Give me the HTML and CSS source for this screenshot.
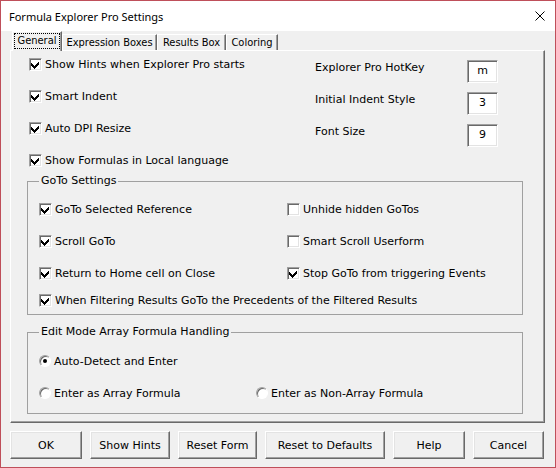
FILE: index.html
```html
<!DOCTYPE html>
<html>
<head>
<meta charset="utf-8">
<link rel="stylesheet" href="styles.css">
</head>
<body>
<div class="window">
  <div class="titlebar">
    <span class="title">Formula Explorer Pro Settings</span>
    <svg class="close" width="10" height="10" viewBox="0 0 10 10"><path d="M0.5 0.5 L9.5 9.5 M9.5 0.5 L0.5 9.5" stroke="#000" stroke-width="1" fill="none"/></svg>
  </div>
  <div class="client">
    <div class="tabs">
      <div class="tab active t-general"><span class="focus">General</span></div>
      <div class="tab t-expr">Expression Boxes</div>
      <div class="tab t-results">Results Box</div>
      <div class="tab t-color">Coloring</div>
    </div>
    <div class="page">
      <div class="top">
        <div class="left-col">
          <label class="opt"><span class="cb on"><svg viewBox="0 0 13 13" width="13" height="13"><polygon points="2,5 2,8 5,11 10,6 10,3 5,8" fill="#000"/></svg></span>Show Hints when Explorer Pro starts</label>
          <label class="opt"><span class="cb on"><svg viewBox="0 0 13 13" width="13" height="13"><polygon points="2,5 2,8 5,11 10,6 10,3 5,8" fill="#000"/></svg></span>Smart Indent</label>
          <label class="opt"><span class="cb on"><svg viewBox="0 0 13 13" width="13" height="13"><polygon points="2,5 2,8 5,11 10,6 10,3 5,8" fill="#000"/></svg></span>Auto DPI Resize</label>
          <label class="opt"><span class="cb on"><svg viewBox="0 0 13 13" width="13" height="13"><polygon points="2,5 2,8 5,11 10,6 10,3 5,8" fill="#000"/></svg></span>Show Formulas in Local language</label>
        </div>
        <div class="right-col">
          <div class="field"><span class="flabel">Explorer Pro HotKey</span><span class="tbox">m</span></div>
          <div class="field"><span class="flabel">Initial Indent Style</span><span class="tbox">3</span></div>
          <div class="field"><span class="flabel">Font Size</span><span class="tbox">9</span></div>
        </div>
      </div>
      <fieldset class="group goto">
        <legend>GoTo Settings</legend>
        <div class="grid2">
          <label class="opt"><span class="cb on"><svg viewBox="0 0 13 13" width="13" height="13"><polygon points="2,5 2,8 5,11 10,6 10,3 5,8" fill="#000"/></svg></span>GoTo Selected Reference</label>
          <label class="opt"><span class="cb"></span>Unhide hidden GoTos</label>
          <label class="opt"><span class="cb on"><svg viewBox="0 0 13 13" width="13" height="13"><polygon points="2,5 2,8 5,11 10,6 10,3 5,8" fill="#000"/></svg></span>Scroll GoTo</label>
          <label class="opt"><span class="cb"></span>Smart Scroll Userform</label>
          <label class="opt"><span class="cb on"><svg viewBox="0 0 13 13" width="13" height="13"><polygon points="2,5 2,8 5,11 10,6 10,3 5,8" fill="#000"/></svg></span>Return to Home cell on Close</label>
          <label class="opt"><span class="cb on"><svg viewBox="0 0 13 13" width="13" height="13"><polygon points="2,5 2,8 5,11 10,6 10,3 5,8" fill="#000"/></svg></span>Stop GoTo from triggering Events</label>
          <label class="opt wide"><span class="cb on"><svg viewBox="0 0 13 13" width="13" height="13"><polygon points="2,5 2,8 5,11 10,6 10,3 5,8" fill="#000"/></svg></span>When Filtering Results GoTo the Precedents of the Filtered Results</label>
        </div>
      </fieldset>
      <fieldset class="group edit">
        <legend>Edit Mode Array Formula Handling</legend>
        <div class="radios">
          <label class="opt"><span class="rb on"></span>Auto-Detect and Enter</label>
          <div class="rrow">
            <label class="opt r1"><span class="rb"></span>Enter as Array Formula</label>
            <label class="opt"><span class="rb"></span>Enter as Non-Array Formula</label>
          </div>
        </div>
      </fieldset>
    </div>
    <div class="buttons">
      <button class="btn w72">OK</button>
      <button class="btn w80">Show Hints</button>
      <button class="btn w79">Reset Form</button>
      <button class="btn w120">Reset to Defaults</button>
      <button class="btn w72">Help</button>
      <button class="btn w71">Cancel</button>
    </div>
  </div>
</div>
</body>
</html>
```

FILE: styles.css
```css
* { box-sizing: border-box; }
html, body { margin: 0; padding: 0; background: #f0f0f0; }
.window {
  width: 556px;
  height: 468px;
  border: 1px solid #bf4f5a;
  background: #f0f0f0;
  font-family: "DejaVu Sans", sans-serif;
  font-size: 11px;
  color: #000;
}
.titlebar {
  height: 30px;
  background: #fff;
  display: flex;
  align-items: center;
  justify-content: space-between;
  padding: 0 10px 0 8px;
}
.title {
  font-family: "Noto Sans", sans-serif;
  font-size: 11px;
  color: #000;
}
.close { display: block; margin-top: -1px; }
.client { padding: 0 10px 0 8px; }
.tabs {
  display: flex;
  align-items: flex-end;
  height: 19px;
  margin-left: 3px;
  position: relative;
  z-index: 2;
  font-family: "DejaVu Sans Condensed", "DejaVu Sans", sans-serif;
  font-stretch: condensed;
}
.tab {
  height: 16px;
  padding: 0;
  line-height: 15px;
  text-align: center;
  border-top: 1px solid #fff;
  border-left: 1px solid #fff;
  border-right: 1px solid #696969;
  box-shadow: inset -1px 0 #a0a0a0;
  background: #f0f0f0;
  white-space: nowrap;
}
.t-general { width: 50px; }
.t-expr { width: 95px; }
.t-results { width: 69px; }
.t-color { width: 52px; }
.tab.active {
  height: 20px;
  margin-bottom: -1px;
  padding: 1px 1px 0 1px;
  line-height: 15px;
}
.focus {
  display: block;
  border: 1px dotted #000;
  padding: 0;
  height: 16px;
  line-height: 14px;
}
.page {
  height: 373px;
  margin-left: 1px;
  border-top: 1px solid #fff;
  border-left: 1px solid #fff;
  border-right: 1px solid #696969;
  border-bottom: 1px solid #696969;
  box-shadow: inset -1px -1px #a0a0a0;
  padding: 3px 0 0 18px;
}
.top { display: flex; }
.left-col {
  width: 286px;
  display: flex;
  flex-direction: column;
  gap: 12px;
}
.right-col {
  margin-top: 6px;
  display: flex;
  flex-direction: column;
  gap: 9px;
}
.opt {
  display: flex;
  align-items: center;
  height: 20px;
  white-space: nowrap;
}
.cb {
  width: 13px;
  height: 13px;
  flex: none;
  margin-right: 3px;
  background: #fff;
  border: 1px solid;
  border-color: #a0a0a0 #fff #fff #a0a0a0;
  box-shadow: inset 1px 1px #696969, inset -1px -1px #e3e3e3;
  position: relative;
}
.cb svg {
  position: absolute;
  left: -1px;
  top: -1px;
  shape-rendering: crispEdges;
}
.rb {
  width: 12px;
  height: 12px;
  flex: none;
  margin-right: 3px;
  border-radius: 50%;
  background: #fff;
  border: 1px solid;
  border-color: #a0a0a0 #fff #fff #a0a0a0;
  box-shadow: inset 1px 1px #696969;
  position: relative;
}
.rb.on::after {
  content: "";
  position: absolute;
  left: 3px;
  top: 3px;
  width: 4px;
  height: 4px;
  border-radius: 50%;
  background: #000;
}
.field {
  display: flex;
  align-items: flex-start;
  height: 23px;
}
.flabel {
  width: 152px;
  line-height: 15px;
}
.tbox {
  width: 31px;
  height: 23px;
  background: #fff;
  border: 1px solid;
  border-color: #a0a0a0 #fff #fff #a0a0a0;
  box-shadow: inset 1px 1px #696969, inset -1px -1px #e3e3e3;
  text-align: center;
  line-height: 20px;
}
.group {
  margin: 4px 0 0 -2px;
  width: 496px;
  border: 1px solid #a0a0a0;
  padding: 0 11px;
  min-width: 0;
}
.group legend {
  padding: 0 2px;
  line-height: 14px;
  white-space: nowrap;
}
.goto { padding-bottom: 4px; }
.grid2 {
  display: grid;
  grid-template-columns: 248px 1fr;
  row-gap: 12px;
  margin-top: 11px;
}
.grid2 .wide { grid-column: 1 / 3; margin-top: -5px; }
.edit { margin-top: 10px; padding-bottom: 10px; }
.radios {
  display: flex;
  flex-direction: column;
  gap: 12px;
  margin-top: 12px;
}
.rrow { display: flex; }
.r1 { width: 217px; }
.buttons {
  display: flex;
  gap: 8px;
  margin-top: 8px;
  margin-left: 1px;
}
.btn {
  height: 28px;
  font: inherit;
  color: #000;
  background: #f0f0f0;
  border: 1px solid;
  border-color: #fff #696969 #696969 #fff;
  box-shadow: inset -1px -1px #a0a0a0, inset 1px 1px #e3e3e3;
  padding: 0;
  margin: 0;
}
.w72 { width: 72px; }
.w80 { width: 80px; }
.w79 { width: 79px; }
.w120 { width: 120px; }
.w71 { width: 71px; }
```
